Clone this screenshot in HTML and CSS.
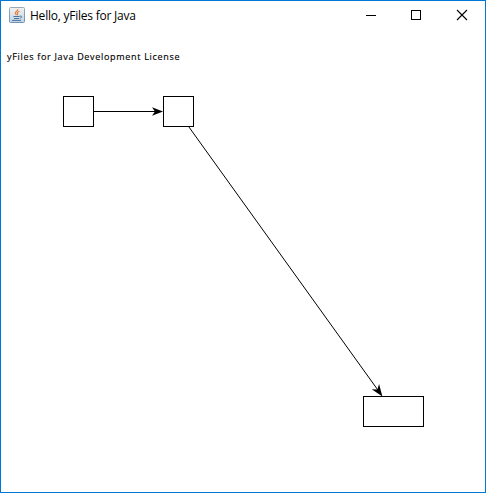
FILE: index.html
```html
<!DOCTYPE html>
<html lang="en">
<head>
<meta charset="utf-8">
<title>Hello, yFiles for Java</title>
<link rel="stylesheet" href="styles.css">
</head>
<body>
<div class="window">
  <header class="titlebar">
    <svg class="app-icon" width="16" height="16" viewBox="0 0 16 16">
      <defs>
        <linearGradient id="tile" x1="0" y1="0" x2="0" y2="1">
          <stop offset="0" stop-color="#9aa9b8"/>
          <stop offset="1" stop-color="#6f93b5"/>
        </linearGradient>
        <linearGradient id="face" x1="0" y1="0" x2="0" y2="1">
          <stop offset="0" stop-color="#f2f2f2"/>
          <stop offset="1" stop-color="#c2d2e2"/>
        </linearGradient>
      </defs>
      <rect x=".5" y=".5" width="15" height="15" rx="1" fill="url(#face)" stroke="url(#tile)"/>
      <path d="M8.7 2C9.4 4 6.2 4.5 6.3 6C6.4 7 7.3 7.2 7.5 8.2M10.4 4.2C8.6 5 7.9 5.7 8.5 6.6C8.9 7.2 8.7 7.7 8.2 8.2" fill="none" stroke="#e8772e" stroke-width="1.1"/>
      <path d="M4.4 9.5H10.5M5 11.5H10M10.5 9.3C13.6 8.4 13 10.9 10.8 11.3M3 13.4H12" fill="none" stroke="#47769e" stroke-width="1"/>
    </svg>
    <span class="title">Hello, yFiles for Java</span>
    <div class="controls">
      <svg class="control" viewBox="0 0 46 29"><path d="M19 14.5H29" stroke="#000"/></svg>
      <svg class="control" viewBox="0 0 46 29"><rect x="18.5" y="9.5" width="9" height="9" fill="none" stroke="#000"/></svg>
      <svg class="control" viewBox="0 0 46 29"><path d="M18 9L28 19M28 9L18 19" stroke="#000" stroke-width="1.1"/></svg>
    </div>
  </header>
  <main class="canvas">
    <p class="license">yFiles for Java Development License</p>
    <svg class="graph" width="484" height="426" viewBox="1 66 484 426">
      <g fill="none" stroke="#000">
        <rect x="63.5" y="96.5" width="30" height="30"/>
        <rect x="163.5" y="96.5" width="30" height="30"/>
        <rect x="363.5" y="396.5" width="60" height="30"/>
        <path d="M94 111.5H158M188.8 126.8L379.3 392"/>
      </g>
      <path d="M0 0L-11 -4.2L-8 0L-11 4.2Z" transform="translate(163 111.5)"/>
      <path d="M0 0L-12 -4.5L-8.5 0L-12 4.5Z" transform="translate(382.4 396.5) rotate(54.4)"/>
    </svg>
  </main>
</div>
</body>
</html>
```
FILE: styles.css
```css
* {
  box-sizing: border-box;
}

body {
  margin: 0;
  background: #fff;
}

.window {
  display: flex;
  flex-direction: column;
  width: 486px;
  height: 493px;
  border: 1px solid #0078d7;
  overflow: hidden;
}

.titlebar {
  display: flex;
  align-items: flex-start;
  height: 29px;
  padding-left: 8px;
}

.app-icon {
  flex: none;
  margin-top: 6px;
}

.title {
  margin: 7px 0 0 5px;
  font: 12px/16px "Open Sans", "Noto Sans", sans-serif;
  letter-spacing: -0.23px;
  color: #000;
  white-space: nowrap;
}

.controls {
  display: flex;
  margin-left: auto;
}

.control {
  width: 46px;
  height: 29px;
}

.canvas {
  display: flex;
  flex-direction: column;
  padding-top: 20px;
}

.license {
  height: 16px;
  margin: 0;
  padding-left: 6px;
  font: 9px/14px "Open Sans", "Noto Sans", sans-serif;
  letter-spacing: 0.69px;
  color: #000;
  -webkit-text-stroke: 0.15px #000;
  white-space: nowrap;
}

.graph {
  display: block;
}
```
